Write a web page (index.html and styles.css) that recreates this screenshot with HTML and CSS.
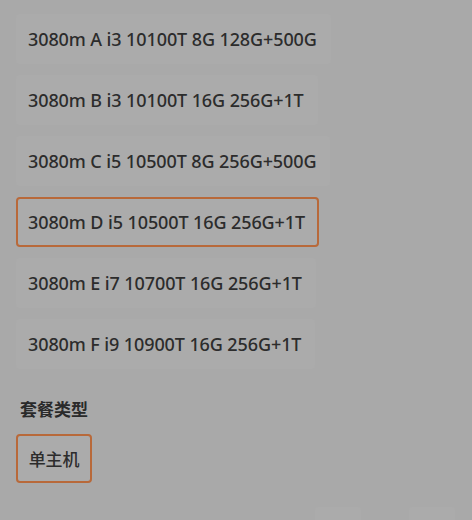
FILE: index.html
```html
<!DOCTYPE html>
<html lang="zh-CN">
<head>
<meta charset="utf-8">
<link rel="stylesheet" href="styles.css">
</head>
<body>
<div class="page">
  <div class="options">
    <div class="chip">3080m A i3 10100T 8G 128G+500G</div>
    <div class="chip">3080m B i3 10100T 16G 256G+1T</div>
    <div class="chip">3080m C i5 10500T 8G 256G+500G</div>
    <div class="chip selected">3080m D i5 10500T 16G 256G+1T</div>
    <div class="chip">3080m E i7 10700T 16G 256G+1T</div>
    <div class="chip">3080m F i9 10900T 16G 256G+1T</div>
  </div>
  <div class="section-title">套餐类型</div>
  <div class="options">
    <div class="chip selected small">单主机</div>
  </div>
  <div class="footer">
    <span class="ghost g1"></span>
    <span class="ghost g2"></span>
  </div>
</div>
</body>
</html>
```
FILE: styles.css
```css
html, body {
  margin: 0;
  padding: 0;
  background: #a9a9a9;
}
.page {
  width: 472px;
  height: 520px;
  overflow: hidden;
  box-sizing: border-box;
  padding: 14px 16px 0 16px;
  font-family: "Noto Sans", "Noto Sans CJK SC", sans-serif;
  color: #2c2c2c;
}
.options {
  display: flex;
  flex-direction: column;
  align-items: flex-start;
  gap: 11px;
}
.chip {
  box-sizing: border-box;
  height: 50px;
  display: flex;
  align-items: center;
  padding: 0 12px 0 10px;
  background: #ababab;
  border: 2px solid transparent;
  border-radius: 4px;
  font-size: 18px;
  font-weight: 500;
  letter-spacing: -0.1px;
}
.chip.selected {
  border-color: #b8693a;
}
.section-title {
  margin-top: 29px;
  margin-left: 4px;
  font-size: 17px;
  font-weight: 700;
  color: #2a2a2a;
  line-height: 24px;
}
.options + .section-title + .options {
  margin-top: 12px;
}
.chip.small {
  height: 49px;
  width: 76px;
  padding: 0 8px;
  justify-content: center;
  font-family: "Noto Sans CJK SC", sans-serif;
  font-size: 17px;
}
.footer {
  display: flex;
  margin-top: 24px;
  padding-left: 299px;
  gap: 48px;
}
.ghost {
  display: block;
  width: 46px;
  height: 20px;
  background: #ababab;
  border-radius: 3px;
}
```
